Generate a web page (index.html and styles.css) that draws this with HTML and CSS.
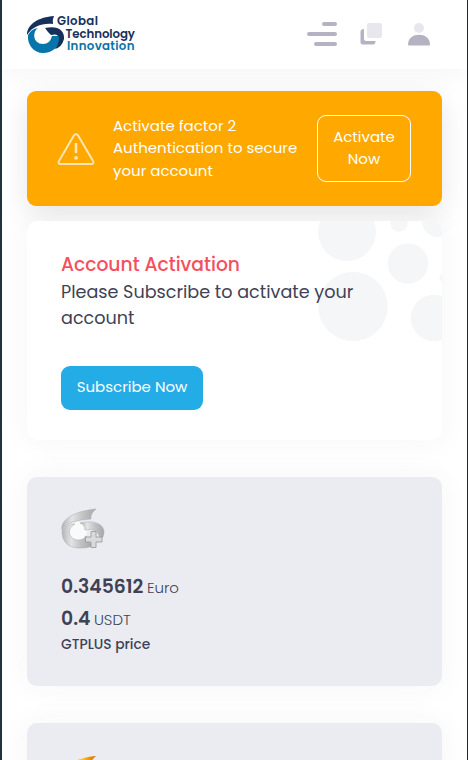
FILE: index.html
```html
<!DOCTYPE html>
<html lang="en">
<head>
<meta charset="utf-8">
<title>Global Technology Innovation</title>
<link rel="stylesheet" href="styles.css">
</head>
<body>
<div class="page">
  <header class="header">
    <svg class="logo" width="112" height="44" viewBox="0 0 112 44" role="img" aria-label="Global Technology Innovation">
      <path fill="#17305a" d="M0 21C0 10 12 3 27 2Q25 6 26 10C15 9 6 12 0 21Z"/>
      <path fill="#0875aa" d="M1 21Q4 15 11 14C5 18 6 30 16 30Q23 30 25 22L34 22C33 33 25 39 16 39C7 39 0 31 1 21Z"/>
      <path fill="#17305a" d="M18 14C30 11 38 16 37 25Q35 33 28 35Q32 30 32 24Q31 19 24 21L21 18Z"/>
      <g class="logo-text">
        <text class="logo-dark" x="30" y="11" textLength="41">Global</text>
        <text class="logo-dark" x="38.500" y="23.500" textLength="69.500">Technology</text>
        <text class="logo-blue" x="40" y="36" textLength="67.500">Innovation</text>
      </g>
    </svg>
    <nav class="tools">
      <svg width="30" height="24" viewBox="0 0 30 24" fill="#b5b3c3"><rect x="15" width="15" height="4" rx="2"/><rect y="10" width="30" height="4" rx="2"/><rect x="7" y="20" width="23" height="4" rx="2"/></svg>
      <svg width="22" height="22" viewBox="0 0 22 22"><path fill="#b5b3c3" d="M4 6v9.500Q4 18 6.500 18H15.500Q15.500 21.500 13 21.500H3Q.5 21.500.5 19V9Q.5 6 4 6Z"/><rect x="7" width="15" height="15" rx="2" fill="#e8e7ed"/></svg>
      <svg class="user" width="24" height="24" viewBox="0 0 24 24"><circle cx="12" cy="6" r="5" fill="#e8e7ed"/><path fill="#b5b3c3" d="M1 22.500C1 9.500 23 9.500 23 22.500Q23 23.500 22 23.500H2Q1 23.500 1 22.500Z"/></svg>
    </nav>
  </header>
  <main class="content">
    <section class="alert">
      <svg class="warning" width="38" height="32" viewBox="0 0 38 32" fill="none" stroke="#ffe5b4" stroke-width="2" stroke-linejoin="round"><path d="M17 2.300Q19 0 21 2.300L36.300 28.500Q37 31 34.500 31H3.500Q1 31 1.700 28.500Z"/><path d="M19 10v10" stroke-width="2.600"/><circle cx="19" cy="24.800" r="1.900" fill="#ffe5b4" stroke="none"/></svg>
      <p class="alert-text">Activate factor 2<br>Authentication to secure<br>your account</p>
      <a class="alert-button">Activate<br>Now</a>
    </section>
    <section class="card activation">
      <svg class="bubbles" width="125" height="120" viewBox="0 0 125 120" fill="#f5f6f8"><circle cx="30" cy="11" r="29"/><circle cx="82" cy="2" r="8.700"/><circle cx="121" cy="0" r="16"/><circle cx="91" cy="42.500" r="20.300"/><circle cx="36" cy="85.500" r="34.700"/><circle cx="117" cy="97" r="23.200"/><circle cx="127" cy="57" r="4.500"/></svg>
      <h2 class="title">Account Activation</h2>
      <p class="message">Please Subscribe to activate your<br>account</p>
      <a class="subscribe">Subscribe Now</a>
    </section>
    <section class="card price">
      <svg class="coin" width="46" height="42" viewBox="0 0 46 42">
        <defs><linearGradient id="silver"><stop stop-color="#b2b4b6"/><stop offset=".3" stop-color="#e3e4e5"/><stop offset=".6" stop-color="#c2c4c5"/><stop offset="1" stop-color="#a5a7a9"/></linearGradient></defs>
        <circle cx="17" cy="23" r="9" fill="#fafafa"/>
        <g fill="url(#silver)" stroke="#a6a8aa" stroke-width=".5"><path d="M1 22C-1 12 13 3 35 1Q29 6 30 11C15 12 7 14 1 22Z"/><path d="M1 23Q5 17 14 16C5 21 7 32 18 32Q23 32 25 28L31 38Q26 40.500 17 40C5 39 1 32 1 23Z"/><path d="M19 15C31 12 43 15 43 24Q43 29 40 31L36 24Q31 20 24 22Q24 17 19 15Z"/></g>
        <path d="M30 23.500h5v5.500h6v5h-6v5.500h-5v-5.500h-5.500v-5h5.500Z" fill="#d8dadb" stroke="#96989a" stroke-width=".8"/>
      </svg>
      <p class="amount"><strong>0.345612</strong><span class="unit">Euro</span></p>
      <p class="amount"><strong>0.4</strong><span class="unit">USDT</span></p>
      <p class="label">GTPLUS price</p>
    </section>
    <section class="card price">
      <svg class="coin gold" width="46" height="42" viewBox="0 0 46 42"><defs><linearGradient id="gold"><stop stop-color="#ffc41b"/><stop offset=".6" stop-color="#ffc41b"/><stop offset="1" stop-color="#d66c00"/></linearGradient></defs><path fill="url(#gold)" d="M1 23C-1 12 13 3 35 1Q29 6 30 11C15 12 7 14 1 23Z"/></svg>
    </section>
  </main>
</div>
</body>
</html>
```
FILE: styles.css
```css
* { box-sizing: border-box; }
body {
  margin: 0;
  height: 760px;
  overflow: hidden;
  font-family: Poppins, Inter, sans-serif;
  color: #3f4254;
}
p, h2 { margin: 0; white-space: nowrap; }
svg { display: block; flex: none; }
.page {
  height: 760px;
  overflow: hidden;
  background: #fff;
  border-left: 2px solid #20343e;
  border-right: 1px solid #22282e;
}
.header {
  height: 69px;
  padding: 14px 36px 0 25px;
  display: flex;
  justify-content: space-between;
  align-items: flex-start;
  box-shadow: 0 8px 24px rgba(0, 0, 0, .035);
}
.logo { overflow: visible; }
.logo-text { font-size: 11.8px; font-weight: 600; }
.logo-dark { fill: #17305a; }
.logo-blue { fill: #0875aa; }
.tools { display: flex; align-items: center; gap: 23px; padding-top: 8px; }
.user { margin-left: 2px; }
.content { padding: 22px 25px 0; }
.alert {
  height: 115px;
  margin-bottom: 15px;
  padding: 0 31px 0 30px;
  display: flex;
  align-items: center;
  border-radius: 9px;
  background: #ffa800;
  box-shadow: 0 8px 30px rgba(0, 0, 0, .1);
  color: #fff;
  font-size: 15px;
  line-height: 22.4px;
}
.alert-text { margin-left: 18px; }
.alert-button {
  width: 94px;
  height: 67px;
  margin-left: auto;
  padding-top: 10px;
  border: 1px solid #fff;
  border-radius: 9px;
  text-align: center;
}
.card {
  border-radius: 10px;
  box-shadow: 0 0 30px rgba(60, 60, 60, .05);
}
.activation {
  position: relative;
  overflow: hidden;
  height: 219px;
  margin-bottom: 37px;
  padding: 30px 34px;
  background: #fff;
}
.bubbles { position: absolute; top: 0; right: 0; }
.title {
  position: relative;
  color: #f64e60;
  font-size: 18.7px;
  line-height: 28px;
  font-weight: 500;
}
.message {
  position: relative;
  font-size: 17.6px;
  line-height: 26px;
}
.subscribe {
  width: 142px;
  height: 44px;
  margin-top: 35px;
  display: flex;
  align-items: center;
  justify-content: center;
  padding-bottom: 3px;
  border-radius: 9px;
  background: #24ace6;
  color: #fff;
  font-size: 15px;
  white-space: nowrap;
}
.price {
  height: 209px;
  margin-bottom: 37px;
  padding: 31px 34px;
  background: #ebecf2;
}
.coin { margin-bottom: 21px; }
.gold { margin-top: 1px; }
.amount {
  height: 32px;
  line-height: 32px;
  display: flex;
  align-items: baseline;
  gap: 3.5px;
}
.amount strong { font-size: 18.8px; font-weight: 600; }
.unit { font-size: 15px; font-weight: 300; }
.label { font-size: 13.8px; line-height: 20px; font-weight: 500; }
```
